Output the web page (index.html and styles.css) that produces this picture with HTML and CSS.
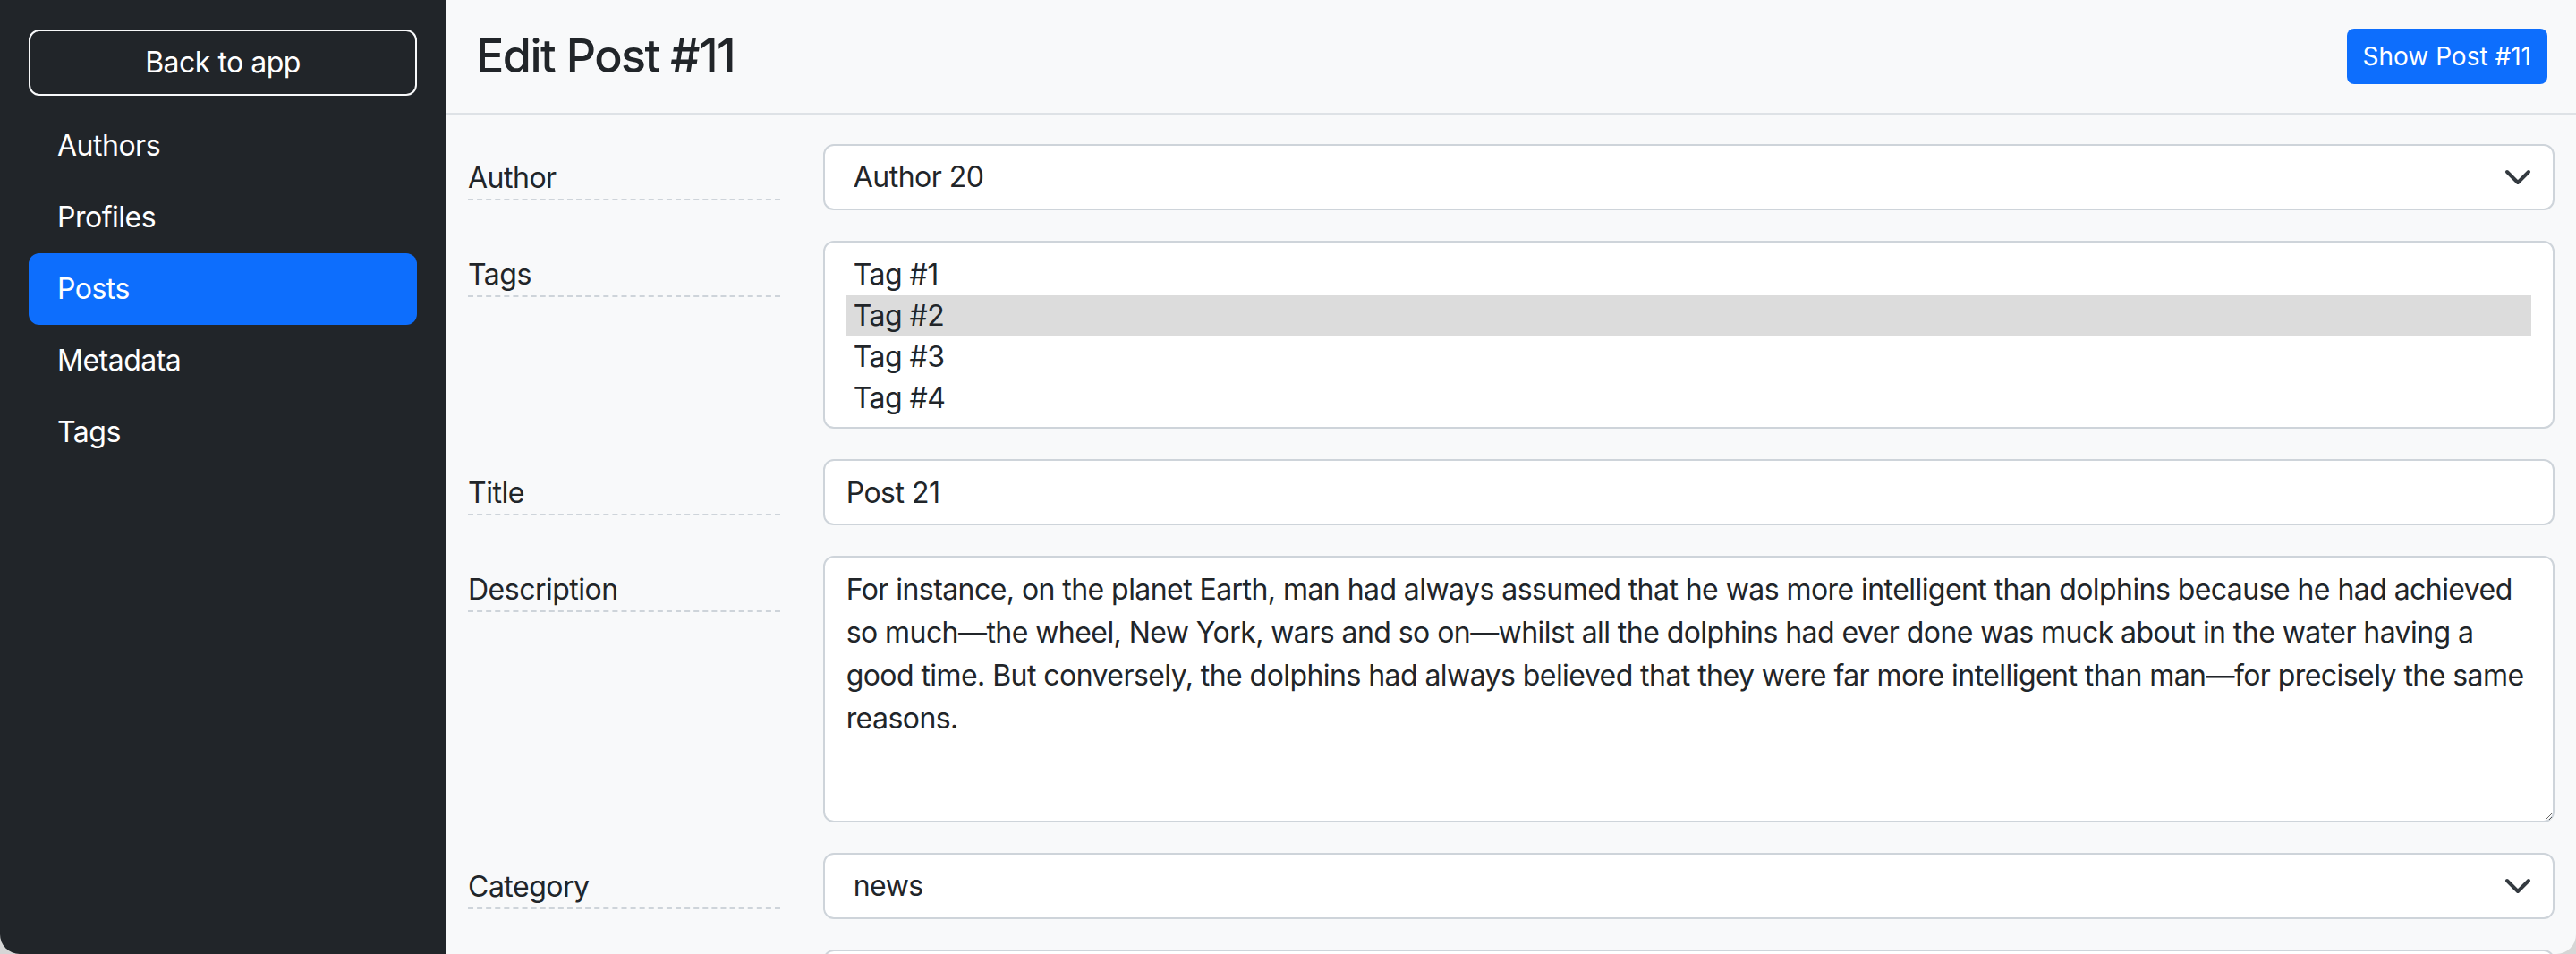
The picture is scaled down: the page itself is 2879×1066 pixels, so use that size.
FILE: index.html
```html
<!DOCTYPE html>
<html lang="en">
<head>
<meta charset="utf-8">
<title>Edit Post #11</title>
<link rel="stylesheet" href="styles.css">
</head>
<body>
<div class="app">
  <aside class="sidebar">
    <a class="btn-back" href="#">Back to app</a>
    <nav class="nav">
      <a class="nav-link" href="#">Authors</a>
      <a class="nav-link" href="#">Profiles</a>
      <a class="nav-link active" href="#">Posts</a>
      <a class="nav-link" href="#">Metadata</a>
      <a class="nav-link" href="#">Tags</a>
    </nav>
  </aside>
  <main class="main">
    <header class="page-header">
      <h1 class="page-title">Edit Post #11</h1>
      <a class="btn-show" href="#">Show Post #11</a>
    </header>
    <form class="form">
      <div class="form-row">
        <label class="form-label">Author</label>
        <div class="select-wrap">
          <select class="form-select"><option>Author 20</option></select>
          <svg class="chevron" viewBox="0 0 16 16" width="32" height="32"><path d="m2 5 6 6 6-6" fill="none" stroke="#343a40" stroke-width="2" stroke-linecap="round" stroke-linejoin="round"/></svg>
        </div>
      </div>
      <div class="form-row">
        <label class="form-label">Tags</label>
        <div class="listbox">
          <div class="list-option">Tag #1</div>
          <div class="list-option selected">Tag #2</div>
          <div class="list-option">Tag #3</div>
          <div class="list-option">Tag #4</div>
        </div>
      </div>
      <div class="form-row">
        <label class="form-label">Title</label>
        <input class="form-control" type="text" value="Post 21">
      </div>
      <div class="form-row">
        <label class="form-label">Description</label>
        <textarea class="form-control textarea">For instance, on the planet Earth, man had always assumed that he was more intelligent than dolphins because he had achieved
so much—the wheel, New York, wars and so on—whilst all the dolphins had ever done was muck about in the water having a
good time. But conversely, the dolphins had always believed that they were far more intelligent than man—for precisely the same
reasons.</textarea>
      </div>
      <div class="form-row">
        <label class="form-label">Category</label>
        <div class="select-wrap">
          <select class="form-select"><option>news</option></select>
          <svg class="chevron" viewBox="0 0 16 16" width="32" height="32"><path d="m2 5 6 6 6-6" fill="none" stroke="#343a40" stroke-width="2" stroke-linecap="round" stroke-linejoin="round"/></svg>
        </div>
      </div>
      <div class="form-row">
        <span class="form-label"></span>
        <input class="form-control" type="text" value="">
      </div>
    </form>
  </main>
</div>
</body>
</html>
```

FILE: styles.css
```css
* { box-sizing: border-box; }
html, body {
  margin: 0;
  height: 1066px;
  overflow: hidden;
  background: #d6d6d6;
}
body {
  font-family: Inter, "Noto Sans", "Liberation Sans", sans-serif;
  font-size: 32px;
  line-height: 1.5;
  color: #212529;
  letter-spacing: -0.5px;
}
.app {
  display: flex;
  height: 1066px;
  border-radius: 0 0 22px 22px;
  overflow: hidden;
}
.sidebar {
  width: 499px;
  flex: none;
  background: #212529;
  padding: 33px 33px 0 32px;
  display: flex;
  flex-direction: column;
}
.btn-back {
  display: flex;
  align-items: center;
  justify-content: center;
  height: 74px;
  border: 2px solid #f8f9fa;
  border-radius: 12px;
  color: #fff;
  text-decoration: none;
}
.nav {
  margin-top: 16px;
  display: flex;
  flex-direction: column;
}
.nav-link {
  height: 80px;
  line-height: 80px;
  padding: 0 32px;
  color: #fff;
  text-decoration: none;
  border-radius: 12px;
}
.nav-link.active { background: #0d6efd; }
.main {
  flex: 1;
  background: #f8f9fa;
  min-width: 0;
}
.page-header {
  height: 128px;
  border-bottom: 2px solid #dee2e6;
  display: flex;
  align-items: center;
  justify-content: space-between;
  padding: 0 32px 0 33px;
}
.page-title {
  margin: 0;
  font-size: 52px;
  font-weight: 500;
  line-height: 1.2;
  letter-spacing: -1.5px;
}
.btn-show {
  display: flex;
  align-items: center;
  height: 62px;
  padding: 0 18px;
  background: #0d6efd;
  color: #fff;
  font-size: 28px;
  letter-spacing: 0;
  border-radius: 8px;
  text-decoration: none;
}
.form {
  padding: 33px 24px 0;
  display: flex;
  flex-direction: column;
  gap: 34px;
}
.form-row {
  display: grid;
  grid-template-columns: calc((100% + 48px) / 6 - 48px) 1fr;
  column-gap: 48px;
  align-items: start;
}
.form-label {
  display: block;
  min-height: 63px;
  padding-top: 14px;
  line-height: 47px;
  border-bottom: 2px dashed #ced4da;
  white-space: nowrap;
}
.form-control, .form-select, .listbox {
  display: block;
  width: 100%;
  font: inherit;
  letter-spacing: inherit;
  color: #212529;
  background: #fff;
  border: 2px solid #ced4da;
  border-radius: 12px;
  margin: 0;
}
.form-control {
  height: 74px;
  padding: 0 24px;
}
.select-wrap { position: relative; }
.form-select {
  appearance: none;
  -webkit-appearance: none;
  height: 74px;
  padding: 0 64px 0 32px;
}
.chevron {
  position: absolute;
  right: 25px;
  top: 21px;
  width: 32px;
  height: 32px;
  pointer-events: none;
}
.listbox {
  height: 210px;
  padding: 13px 24px;
}
.list-option {
  height: 46px;
  line-height: 46px;
  padding: 0 8px;
}
.list-option.selected { background: #dcdcdc; }
.textarea {
  height: 298px;
  padding: 12px 4px 12px 24px;
  line-height: 48px;
  letter-spacing: -0.56px;
  resize: vertical;
}
```
